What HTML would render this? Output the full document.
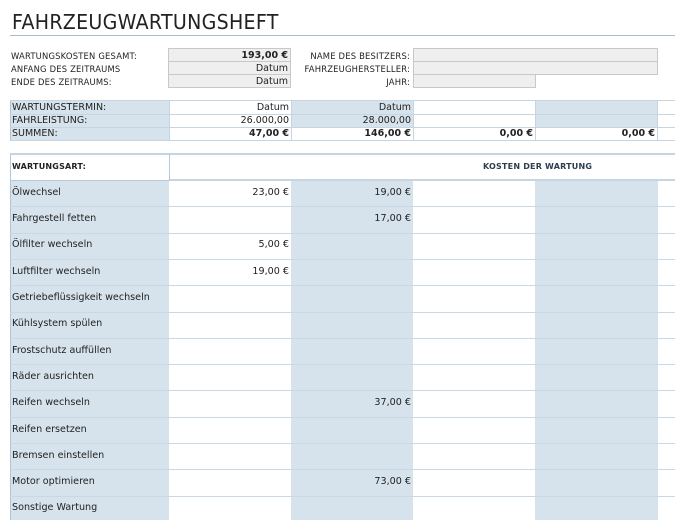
<!DOCTYPE html>
<html><head><meta charset="utf-8"><style>
*{margin:0;padding:0;box-sizing:border-box}
body{width:675px;height:520px;overflow:hidden;background:#fff;font-family:"DejaVu Sans","Liberation Sans",sans-serif;color:#222;position:relative}
.a{position:absolute}
.t{font-size:20px;left:12px;top:10px;font-family:"DejaVu Sans",sans-serif;letter-spacing:0.3px;color:#222;transform:scaleX(0.95);transform-origin:left}
.sm{font-size:8.4px;letter-spacing:0.2px}
.box{background:#efefef;border:1px solid #c8c8c8}
.r{text-align:right}
.b{font-weight:bold}
.sh{background:#d6e3ec}
.f9{font-size:9.5px}
.f10{font-size:9.6px}
</style></head><body>
<div class="a t">FAHRZEUGWARTUNGSHEFT</div>
<div class="a" style="left:10px;top:35px;width:665px;height:1px;background:#a8bccb"></div>

<div class="a sm" style="left:11px;top:51px">WARTUNGSKOSTEN GESAMT:</div>
<div class="a sm" style="left:11px;top:64px">ANFANG DES ZEITRAUMS</div>
<div class="a sm" style="left:11px;top:77px">ENDE DES ZEITRAUMS:</div>
<div class="a box f9 r b" style="left:168px;top:48px;width:123px;height:14px;padding-right:2px;line-height:13px">193,00 €</div>
<div class="a box f9 r" style="left:168px;top:61px;width:123px;height:14px;padding-right:2px;line-height:13px">Datum</div>
<div class="a box f9 r" style="left:168px;top:74px;width:123px;height:14px;padding-right:2px;line-height:13px">Datum</div>

<div class="a sm r" style="left:290px;top:51px;width:120px">NAME DES BESITZERS:</div>
<div class="a sm r" style="left:290px;top:64px;width:120px">FAHRZEUGHERSTELLER:</div>
<div class="a sm r" style="left:290px;top:77px;width:120px">JAHR:</div>
<div class="a box" style="left:413px;top:48px;width:245px;height:14px"></div>
<div class="a box" style="left:413px;top:61px;width:245px;height:14px"></div>
<div class="a box" style="left:413px;top:74px;width:123px;height:14px"></div>

<div class="a sh" style="left:10px;top:101px;width:159px;height:39px;border-left:1px solid #b0c6d6"></div>
<div class="a sh" style="left:291px;top:101px;width:122px;height:26px"></div>
<div class="a sh" style="left:535px;top:101px;width:123px;height:26px"></div>
<div class="a" style="left:10px;top:100px;width:665px;height:1px;background:#c5d6e2"></div>
<div class="a" style="left:10px;top:114px;width:665px;height:1px;background:#c5d6e2"></div>
<div class="a" style="left:10px;top:127px;width:665px;height:1px;background:#c5d6e2"></div>
<div class="a" style="left:10px;top:140px;width:665px;height:1px;background:#c5d6e2"></div>
<div class="a" style="left:169px;top:100px;width:1px;height:40px;background:#c5d6e2"></div>
<div class="a" style="left:291px;top:100px;width:1px;height:40px;background:#c5d6e2"></div>
<div class="a" style="left:413px;top:100px;width:1px;height:40px;background:#c5d6e2"></div>
<div class="a" style="left:535px;top:100px;width:1px;height:40px;background:#c5d6e2"></div>
<div class="a" style="left:657px;top:100px;width:1px;height:40px;background:#c5d6e2"></div>
<div class="a f9" style="left:12px;top:101px;line-height:13px">WARTUNGSTERMIN:</div>
<div class="a f9" style="left:12px;top:114px;line-height:13px">FAHRLEISTUNG:</div>
<div class="a f9" style="left:12px;top:127px;line-height:13px">SUMMEN:</div>
<div class="a f9 r" style="left:169px;top:101px;width:120px;line-height:13px">Datum</div>
<div class="a f9 r" style="left:169px;top:114px;width:120px;line-height:13px">26.000,00</div>
<div class="a f9 r b" style="left:169px;top:127px;width:120px;line-height:13px">47,00 €</div>
<div class="a f9 r" style="left:291px;top:101px;width:120px;line-height:13px">Datum</div>
<div class="a f9 r" style="left:291px;top:114px;width:120px;line-height:13px">28.000,00</div>
<div class="a f9 r b" style="left:291px;top:127px;width:120px;line-height:13px">146,00 €</div>
<div class="a f9 r b" style="left:413px;top:127px;width:120px;line-height:13px">0,00 €</div>
<div class="a f9 r b" style="left:535px;top:127px;width:120px;line-height:13px">0,00 €</div>

<div class="a" style="left:10px;top:153px;width:665px;height:2px;background:#c5d6e2"></div>
<div class="a" style="left:10px;top:153px;width:160px;height:28px;border:1px solid #b5c9d8;border-top:2px solid #c5d6e2"></div>
<div class="a b" style="left:12px;top:162px;font-size:8px;letter-spacing:0.2px">WARTUNGSART:</div>
<div class="a b" style="left:483px;top:162px;font-size:8px;color:#2d3e50;letter-spacing:0.2px">KOSTEN DER WARTUNG</div>
<div class="a" style="left:170px;top:179px;width:505px;height:2px;background:#c5d6e2"></div>
<div class="a sh" style="left:10px;top:181px;width:159px;height:339px;border-left:1px solid #b0c6d6"></div>
<div class="a sh" style="left:291px;top:181px;width:122px;height:339px"></div>
<div class="a sh" style="left:535px;top:181px;width:123px;height:339px"></div>
<div id="rows"></div>
<div class="a f10" style="left:12px;top:187px">Ölwechsel</div>
<div class="a f10" style="left:12px;top:213px">Fahrgestell fetten</div>
<div class="a f10" style="left:12px;top:239px">Ölfilter wechseln</div>
<div class="a f10" style="left:12px;top:266px">Luftfilter wechseln</div>
<div class="a f10" style="left:12px;top:292px">Getriebeflüssigkeit wechseln</div>
<div class="a f10" style="left:12px;top:318px">Kühlsystem spülen</div>
<div class="a f10" style="left:12px;top:345px">Frostschutz auffüllen</div>
<div class="a f10" style="left:12px;top:371px">Räder ausrichten</div>
<div class="a f10" style="left:12px;top:397px">Reifen wechseln</div>
<div class="a f10" style="left:12px;top:424px">Reifen ersetzen</div>
<div class="a f10" style="left:12px;top:450px">Bremsen einstellen</div>
<div class="a f10" style="left:12px;top:476px">Motor optimieren</div>
<div class="a f10" style="left:12px;top:502px">Sonstige Wartung</div>
<div class="a f10 r" style="left:169px;top:187px;width:120px">23,00 €</div>
<div class="a f10 r" style="left:291px;top:187px;width:120px">19,00 €</div>
<div class="a f10 r" style="left:291px;top:213px;width:120px">17,00 €</div>
<div class="a f10 r" style="left:169px;top:239px;width:120px">5,00 €</div>
<div class="a f10 r" style="left:169px;top:266px;width:120px">19,00 €</div>
<div class="a f10 r" style="left:291px;top:397px;width:120px">37,00 €</div>
<div class="a f10 r" style="left:291px;top:476px;width:120px">73,00 €</div>
<script>
var s='';for(var k=1;k<13;k++){var y=Math.round(180+k*26.3);s+='<div class="a" style="left:10px;top:'+y+'px;width:665px;height:1px;background:#c9d8e3"></div>';}
document.getElementById('rows').outerHTML=s;
</script>
</body></html>
